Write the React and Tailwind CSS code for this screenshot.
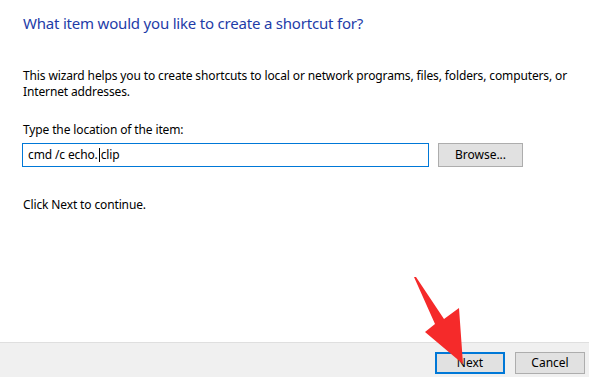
export default function App() {
  return (
    <div className="w-[589px] h-[377px] bg-white flex flex-col overflow-hidden relative font-['Segoe_UI','Noto_Sans',sans-serif] text-[12px] text-black">
      <div className="flex-1 pl-[23px] pr-4">
        <h1 className="mt-[12px] text-[15px] tracking-[-0.2px] leading-[22px] text-[#1e3ca8]">
          What item would you like to create a shortcut for?
        </h1>
        <p className="mt-[34px] leading-[16px] tracking-[-0.13px]">
          This wizard helps you to create shortcuts to local or network programs, files, folders, computers, or Internet addresses.
        </p>
        <div className="mt-[22px] leading-[16px] tracking-[-0.13px]">Type the location of the item:</div>
        <div className="mt-[5px] flex items-center">
          <div className="ml-[-1px] w-[407px] h-[24px] border border-[#0078d7] flex items-center pl-[5px] tracking-[-0.13px]">
            cmd /c echo.<span className="inline-block w-px h-[14px] bg-black mx-[1px]"></span>clip
          </div>
          <button className="ml-[9px] w-[85px] h-[24px] bg-[#e1e1e1] border border-[#adadad] text-center">
            Browse...
          </button>
        </div>
        <div className="mt-[30px] leading-[16px] tracking-[-0.13px]">Click Next to continue.</div>
      </div>
      <div className="h-[35px] bg-[#f0f0f0] border-t border-[#dfdfdf] flex items-start justify-end pt-[9px] pr-[4px] gap-[10px]">
        <button className="w-[70px] h-[22px] bg-[#e1e1e1] border-2 border-[#0078d7] leading-[18px]">Next</button>
        <button className="w-[70px] h-[22px] bg-[#e1e1e1] border border-[#adadad]">Cancel</button>
      </div>
      <svg className="absolute left-0 top-0 pointer-events-none" width="589" height="377" viewBox="0 0 589 377">
        <polygon points="414,277 416,277 444,319 459,308 463,364 425,332 435,324" fill="#f52a2a" />
      </svg>
    </div>
  );
}
